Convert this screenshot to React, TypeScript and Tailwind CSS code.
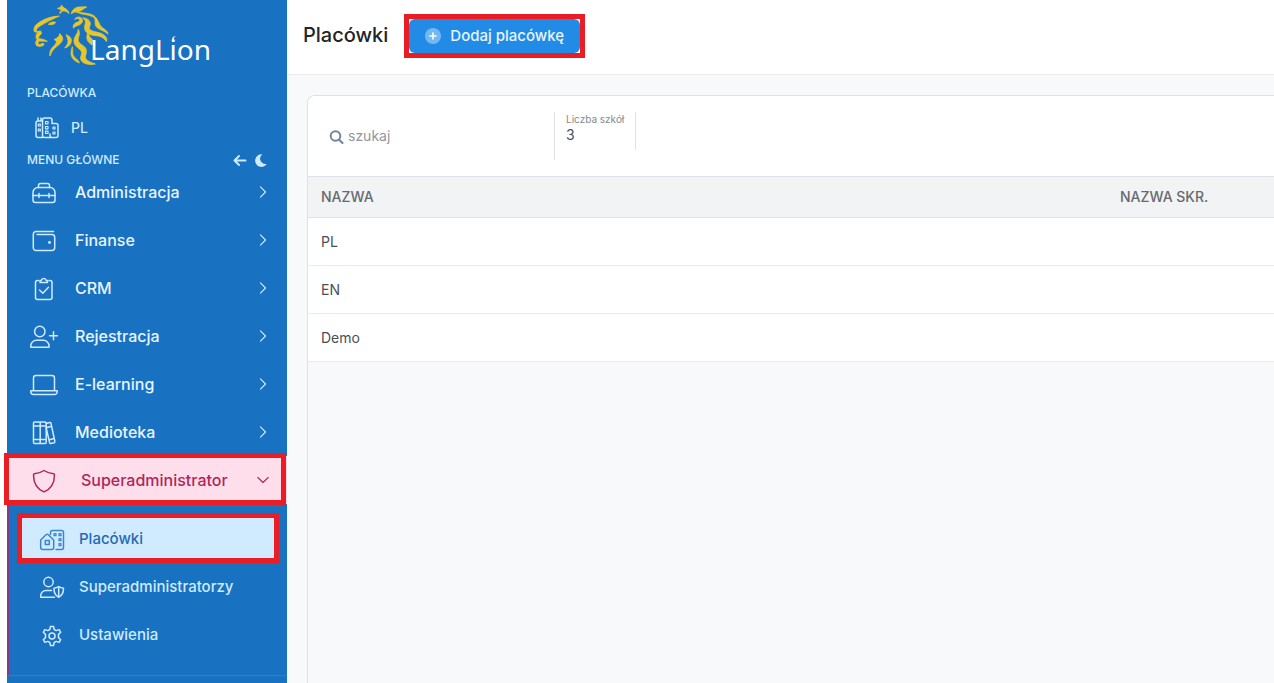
import type { ReactNode } from 'react';
import { clsx } from 'clsx';

interface IconProps {
  children: ReactNode;
  className?: string;
}

/** Line icon on a 28px grid */
function LineIcon({ children, className }: IconProps) {
  return (
    <svg
      className={clsx('w-7 h-7 shrink-0', className)}
      viewBox="0 0 28 28"
      fill="none"
      stroke="currentColor"
      strokeWidth={1.5}
      strokeLinecap="round"
      strokeLinejoin="round"
      aria-hidden="true"
    >
      {children}
    </svg>
  );
}

const icons = {
  buildings: (
    <>
      <path d="M9.500 23.500H5a2 2 0 0 1-2-2V9a2 2 0 0 1 2-2h4.500M5 7V4M8 7V4" />
      <path d="M19 23.500h-7.500a2 2 0 0 1-2-2V6a2 2 0 0 1 2-2H17a2 2 0 0 1 2 2v3.500h4a2 2 0 0 1 2 2v10a2 2 0 0 1-2 2h-4a2 2 0 0 1-2-2V20" />
      <path d="M5.300 10h2v2h-2zM5.300 15h2v2h-2zM12.500 7.500h2.500v2.300h-2.500zM12.500 12.500h2.500v2.300h-2.500zM12.500 17.200h2.500v2.300h-2.500zM20 13h2v2h-2zM20 18h2v2h-2z" strokeWidth={1.2} />
    </>
  ),
  briefcase: (
    <>
      <path d="M8.500 9.500V7.500a2 2 0 0 1 2-2h7a2 2 0 0 1 2 2v2" />
      <path d="M8 9.500h12a5 5 0 0 1 5 5V22a2.500 2.500 0 0 1-2.500 2.500h-17A2.500 2.500 0 0 1 3 22v-7.500a5 5 0 0 1 5-5z" />
      <path d="M3 17.500h5.500m1 0h9m1 0H25M9 15.500v4M19 15.500v4" />
    </>
  ),
  wallet: (
    <>
      <path d="M23.500 5.500H6A2.700 2.700 0 0 0 3.300 8.200v13.600A2.700 2.700 0 0 0 6 24.500h16a2.700 2.700 0 0 0 2.700-2.700V11A2.700 2.700 0 0 0 22 8.500H7" />
      <circle cx="19.500" cy="16.500" r="0.700" fill="currentColor" />
    </>
  ),
  clipboard: (
    <>
      <path d="M8.500 6.500h-1a2 2 0 0 0-2 2v15a2 2 0 0 0 2 2h12.500a2 2 0 0 0 2-2v-15a2 2 0 0 0-2-2h-1" />
      <path d="M10 8.500h7.500V6.500h-1.300a2.500 2.500 0 0 0-4.900 0H10z" />
      <path d="m9.500 16 3.300 3.300 5.700-6" />
    </>
  ),
  userPlus: (
    <>
      <circle cx="9.800" cy="9.500" r="5.200" />
      <path d="M.8 25.300v-1.500a5.500 5.500 0 0 1 5.500-5.500h7.200a5.500 5.500 0 0 1 5.500 5.500v1.500zM19.500 13.800h8M23.500 9.800v8" />
    </>
  ),
  laptop: (
    <>
      <path d="M3.500 20V8a2.500 2.500 0 0 1 2.500-2.500h16A2.500 2.500 0 0 1 24.500 8v12" />
      <path d="M.8 20.800h26.400v1a2.700 2.700 0 0 1-2.700 2.700h-21A2.700 2.700 0 0 1 .8 21.800z" />
    </>
  ),
  books: (
    <>
      <path d="M4.500 4h4.700a1 1 0 0 1 1 1v19.500a1 1 0 0 1-1 1H4.500a1 1 0 0 1-1-1V5a1 1 0 0 1 1-1zM10.200 4h5a1 1 0 0 1 1 1v19.500a1 1 0 0 1-1 1h-5" />
      <path d="M3.500 8h12.700M3.500 21.500h12.700M16.200 5.500l3.500-1a1 1 0 0 1 1.200.7l4 18.300a1 1 0 0 1-.7 1.200l-3.400.8a1 1 0 0 1-1.200-.8L16.200 10M17 9.500l4.700-1.200M19.500 21.800l4.600-1.200" />
    </>
  ),
  shield: <path d="M14 4.500c3 2 6.500 3 9.500 3.200.7.100 1 .5 1 1.200 0 8-3.500 14-10.500 17C7 22.900 3.500 16.900 3.500 8.900c0-.7.300-1.100 1-1.200 3-.2 6.500-1.200 9.500-3.200z" />,
  homeBuilding: (
    <>
      <path d="M2.700 15 8 9.800a1.700 1.700 0 0 1 2.300 0l5.400 5.200v7.500a2 2 0 0 1-2 2h-9a2 2 0 0 1-2-2zM7.300 15.500h4v4h-4z" />
      <path d="M12.500 9.500v-2a2 2 0 0 1 2-2h9a2 2 0 0 1 2 2v15a2 2 0 0 1-2 2h-5.500" />
      <path d="M16 8.700h2v2h-2zM21 8.700h2v2h-2zM21 13.700h2v2h-2zM21 18.700h2v2h-2z" strokeWidth={1.2} />
    </>
  ),
  userShield: (
    <>
      <circle cx="10.500" cy="9" r="4.700" />
      <path d="M16.500 24.300H2.700v-1.500a5.300 5.300 0 0 1 5.300-5.300h5.500" />
      <path d="M20.700 13.500c1.500 1 3 1.500 4.800 1.700 0 4-1.500 7.500-4.800 9-3.300-1.500-4.800-5-4.800-9 1.800-.2 3.300-.7 4.800-1.700zM20.700 13.500v10.500" />
    </>
  ),
  gear: (
    <>
      <circle cx="14" cy="15" r="3" />
      <path d="M12.500 5.500h3l.7 3 2 1.100 2.900-1 1.600 2.700-2.200 2.100v3.200l2.200 2.100-1.600 2.700-2.900-1-2 1.100-.7 3h-3l-.7-3-2-1.100-2.900 1-1.600-2.700L7.500 16.600v-3.200L5.300 11.300l1.600-2.700 2.900 1 2-1.100z" />
    </>
  ),
};

const MENU_ITEMS = [
  { label: 'Administracja', icon: icons.briefcase },
  { label: 'Finanse', icon: icons.wallet },
  { label: 'CRM', icon: icons.clipboard },
  { label: 'Rejestracja', icon: icons.userPlus },
  { label: 'E-learning', icon: icons.laptop },
  { label: 'Medioteka', icon: icons.books },
];

const SUBMENU_ITEMS = [
  { label: 'Placówki', icon: icons.homeBuilding, active: true },
  { label: 'Superadministratorzy', icon: icons.userShield, active: false },
  { label: 'Ustawienia', icon: icons.gear, active: false },
];

const SCHOOLS = [
  { name: 'PL', shortName: '' },
  { name: 'EN', shortName: '' },
  { name: 'Demo', shortName: '' },
];

function Logo() {
  return (
    <svg className="w-[180px] h-[72px]" viewBox="99 0 540 216" role="img" aria-label="LangLion">
      <g fill="#e5c62d" stroke="#e5c62d" strokeWidth={2.5} strokeLinejoin="round">
        {/* Ear and face */}
        <path d="M172 25c7-1 10-3 13-10 3 6 6 9 12 11 5 3 9 8 10 15-6-6-11-9-17-8-5 1-8 4-10 8-1-5 1-8 5-10-4-3-8-4-13-6z" />
        <path d="M178 48c-25 1-43 8-60 19-10 6-17 14-16 25 2 5 7 5 13 4-4 4-7 8-7 14 0 4 1 7 3 9-5 6-5 13-1 18 7 4 16 2 22-2l-3-6c-6 4-11 5-15 3 0-4 1-7 5-9l23 1c-8-5-15-7-26-8-1-5 2-9 7-14 2-3 2-7-2-9l-13 2c0-8 5-12 12-17 18-11 35-20 58-30z" />
        <path d="M145 73c7-7 14-9 22-6-3 6-10 8-22 6z" />
        {/* Mane */}
        <path d="M214 41c3-14 15-21 28-20 7 0 12-1 18 0-8 4-13 9-19 12-9 3-18 1-27 8z" />
        <path d="M229 36c23 4 47 3 57 15 11 11 9 22 21 32 9 7 17 10 17 20-12-14-35-14-38-29-2-10 2-16-6-23-12-8-34-6-51-15z" />
        <path d="M220 84c-2-10 5-16 13-18 5-2 7-4 6-7-3-4-10-4-15-1 3-7 14-9 20-4 8 8 2 16-5 20-6 3-12 3-19 10z" />
        <path d="M248 53c13 2 23 8 23 18 0 8-6 12-2 17 8 9 27 7 38 14 12 7 16 15 12 23-6-12-18-17-31-18-20-1-34-10-34-23-1-13 9-19-6-31z" />
        <path d="M150 168c-3-16 6-25 15-34 6-8 6-13-3-15 10-5 16-9 17-18 7 6 11 12 8 20-6 16-28 19-37 47z" />
        <path d="M198 104c12 4 17 11 16 20-1 10-9 17-20 20 7-9 11-15 10-22-1-7-3-12-6-18z" />
        <path d="M235 88c9 18-5 26 1 37 5 11 25 13 23 30 0 10-6 15-1 22 6 8 17 11 28 15-19 4-38-1-43-12-5-12 6-17 1-26-7-11-22-15-22-31-1-13 12-21 13-35z" />
        <path d="M217 140c3 14-2 22 6 31 7 8 13 9 15 18-17-6-25-18-25-29 0-8 2-13 4-20z" />
        <path d="M263 99c6 9 7 16 14 19l-1 17c-14-9-19-20-13-36z" />
      </g>
      <text x="270" y="181" fill="#fff" fontFamily="'Noto Sans', sans-serif" fontSize="84">
        LangLion
      </text>
      <path d="M531 108c-10 2-13 10-6 17-11-3-13-17 6-17z" fill="#fff" />
    </svg>
  );
}

function Chevron({ open = false }: { open?: boolean }) {
  return (
    <svg
      className={open ? 'w-3 h-2' : 'w-2 h-3 text-[#d0ebff]'}
      viewBox={open ? '0 0 12 8' : '0 0 8 12'}
      fill="none"
      stroke="currentColor"
      strokeWidth={1.1}
      strokeLinecap="round"
      strokeLinejoin="round"
      aria-hidden="true"
    >
      <path d={open ? 'M.8 1.500 6 6.500l5.200-5' : 'M1.500.8 6.500 6l-5 5.200'} />
    </svg>
  );
}

function Sidebar() {
  return (
    <aside className="flex w-[280px] shrink-0 flex-col bg-[#1971c2] text-[#d0ebff]">
      <a href="#" className="block h-[75px] pl-[26px]">
        <Logo />
      </a>
      <h2 className="mt-2 h-5 px-5 text-xs leading-5 font-medium">PLACÓWKA</h2>
      <button type="button" className="mt-2 flex h-[33px] items-center gap-[10px] pl-[26px] text-left text-sm font-medium">
        <LineIcon>{icons.buildings}</LineIcon>
        PL
      </button>
      <div className="mt-2 flex h-4 items-center px-5">
        <h2 className="flex-1 text-xs leading-4 font-medium">MENU GŁÓWNE</h2>
        <button type="button" aria-label="Zwiń menu">
          <svg className="h-4 w-4" viewBox="0 0 16 16" fill="none" stroke="currentColor" strokeWidth={2} strokeLinecap="round" strokeLinejoin="round">
            <path d="M14.500 8.500H3.500M8 4 3.500 8.500 8 13" />
          </svg>
        </button>
        <button type="button" aria-label="Tryb ciemny" className="ml-1">
          <svg className="h-4 w-4" viewBox="0 0 16 16" fill="currentColor">
            <path d="M10.500 2.300a6.300 6.300 0 1 0 4.700 10.400.5.500 0 0 0-.5-.8 5.200 5.200 0 0 1-4-8.900c.4-.3.300-.7-.2-.7z" />
          </svg>
        </button>
      </div>

      <nav className="flex flex-col">
        {MENU_ITEMS.map((item) => (
          <button
            key={item.label}
            type="button"
            className="flex h-12 items-center gap-[17px] pr-5 pl-[23px] text-left text-base font-medium text-[#e7f5ff]"
          >
            <LineIcon className="text-[#d0ebff]">{item.icon}</LineIcon>
            <span className="flex-1">{item.label}</span>
            <Chevron />
          </button>
        ))}

        <button
          type="button"
          aria-expanded="true"
          className="relative flex h-12 items-center gap-[23px] bg-[#ffdeeb] pr-[18px] pl-[23px] text-left text-base font-medium text-[#b0265a]"
        >
          <LineIcon>{icons.shield}</LineIcon>
          <span className="flex-1">Superadministrator</span>
          <Chevron open />
          <span className="absolute -top-[3px] right-px -bottom-px -left-[3px] border-[5px] border-[#ea1c24]" />
        </button>

        <div className="flex flex-col border-b border-l-2 border-b-[#2b7fcc] border-l-[#8a3a83] pt-[11px] pb-4">
          {SUBMENU_ITEMS.map((item) => (
            <a
              key={item.label}
              href="#"
              className={clsx(
                'relative mr-2 ml-2 flex h-12 items-center gap-[13px] pl-[21px] text-[15px] font-medium',
                item.active && 'bg-[#d0ebff] text-[#1f6bb5]'
              )}
            >
              <LineIcon className={item.active ? 'text-[#3a86cd]' : undefined}>{item.icon}</LineIcon>
              {item.label}
              {item.active && <span className="absolute inset-0 -top-0.5 border-[5px] border-[#ea1c24]" />}
            </a>
          ))}
        </div>
      </nav>
    </aside>
  );
}

function SchoolsCard() {
  return (
    <section className="flex flex-1 flex-col overflow-hidden rounded-tl-lg border-t border-l border-[#dee2e6]">
      <div className="flex h-20 items-start bg-white pt-4">
        <label className="flex h-12 w-[247px] items-center gap-[3px] border-r border-[#dee2e6] pr-3 pl-[21px]">
          <svg className="h-4 w-4 shrink-0 text-[#748499]" viewBox="0 0 16 16" fill="none" stroke="currentColor" strokeWidth={2} strokeLinecap="round">
            <circle cx="6.500" cy="8" r="4.800" />
            <path d="m10.200 11.700 3.300 3.300" />
          </svg>
          <input
            type="text"
            aria-label="szukaj"
            placeholder="szukaj"
            className="w-full min-w-0 bg-transparent text-sm placeholder:text-[#939699] outline-none"
          />
        </label>
        <dl className="h-[38px] border-r border-[#dee2e6] px-[11px]">
          <dt className="text-[10px] leading-[15px] text-[#868a8e]">Liczba szkół</dt>
          <dd className="text-sm leading-4 text-[#495057]">3</dd>
        </dl>
      </div>
      <table className="w-full table-fixed border-separate border-spacing-0 text-left text-sm">
        <thead className="bg-[#f1f3f5] text-[#666a6e]">
          <tr className="h-[42px]">
            <th className="border-y border-[#dee2e6] px-[13px] font-medium">NAZWA</th>
            <th className="w-[167px] border-y border-[#dee2e6] px-[13px] font-medium">NAZWA SKR.</th>
          </tr>
        </thead>
        <tbody className="bg-white text-[#495057]">
          {SCHOOLS.map((school) => (
            <tr key={school.name} className="h-12">
              <td className="border-b border-[#e9ecef] px-[13px]">{school.name}</td>
              <td className="border-b border-[#e9ecef] px-[13px]">{school.shortName}</td>
            </tr>
          ))}
        </tbody>
      </table>
    </section>
  );
}

export default function App() {
  return (
    <div className="flex min-h-screen bg-white pl-[7px] font-['Inter',sans-serif]">
      <Sidebar />
      <main className="flex min-w-0 flex-1 flex-col bg-[#f8f9fb]">
        <header className="flex h-[75px] items-start gap-[21px] border-b border-[#e9ecef] bg-white pt-[19px] pl-4">
          <h1 className="text-xl leading-8 font-medium text-[#212529]">Placówki</h1>
          <button
            type="button"
            className="relative flex h-[34px] items-center gap-[9px] rounded-md bg-[#228be6] px-4 text-[15px] font-medium text-[#e7f5ff]"
          >
            <svg className="h-4 w-4" viewBox="0 0 16 16" aria-hidden="true">
              <circle cx="8" cy="8" r="8" fill="#74b8f3" />
              <path d="M8 5v6M5 8h6" stroke="#fff" strokeWidth={1.6} strokeLinecap="round" />
            </svg>
            Dodaj placówkę
            <span className="absolute -inset-[5px] border-[5px] border-[#ea1c24]" />
          </button>
        </header>
        <div className="flex flex-1 flex-col pt-5 pl-5">
          <SchoolsCard />
        </div>
      </main>
    </div>
  );
}
